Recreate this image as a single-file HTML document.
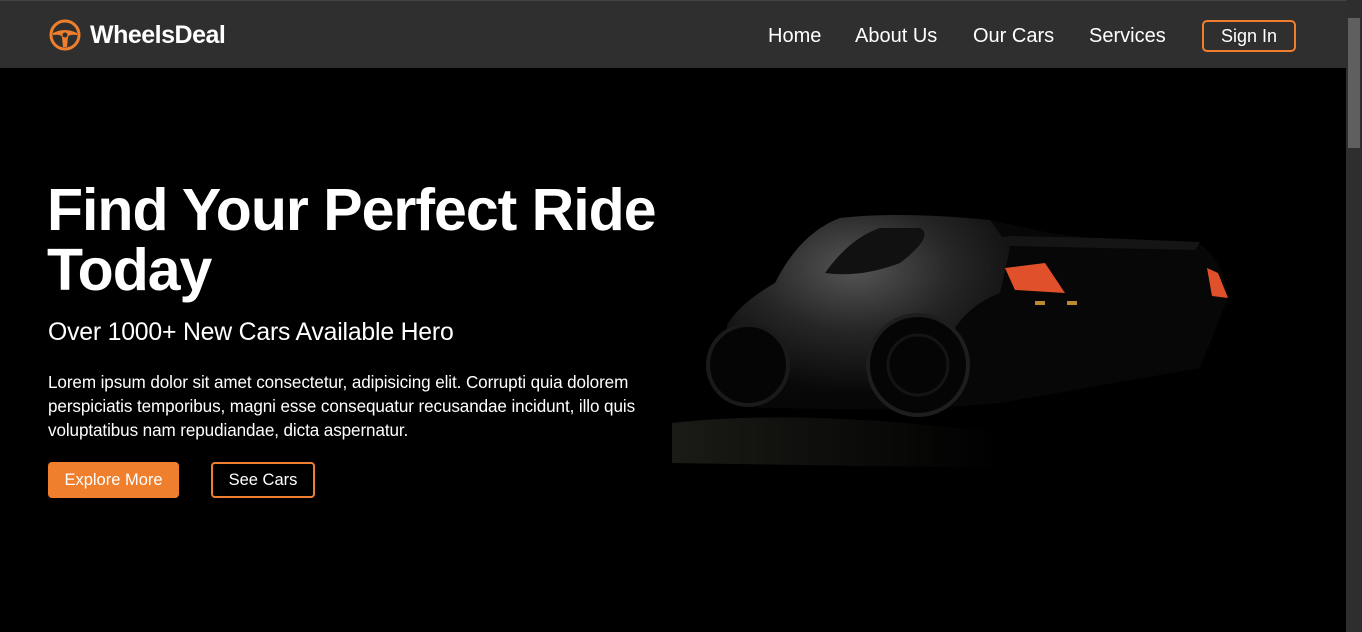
<!DOCTYPE html>
<html><head><meta charset="utf-8"><style>
*{margin:0;padding:0;box-sizing:border-box}
body{width:1362px;height:632px;background:#000;font-family:"Liberation Sans",sans-serif;color:#fff;overflow:hidden;position:relative}
.nav{position:absolute;left:0;top:0;width:1346px;height:68px;background:#2f2f2f;border-top:1px solid #444}
.logo{position:absolute;left:49px;top:18px;display:flex;align-items:center}
.logo span{font-weight:bold;font-size:25px;margin-left:9px;letter-spacing:-0.5px}
.links{position:absolute;top:23px;font-size:20px;line-height:24px}
.links a{position:absolute;white-space:nowrap;color:#fff;text-decoration:none}
.sign{position:absolute;left:1202px;top:19px;width:94px;height:32px;border:2px solid #ef7f2c;border-radius:5px;text-align:center;line-height:28px;font-size:18px}
.sb{position:absolute;left:1346px;top:0;width:16px;height:632px;background:#2e2e2e}
.thumb{position:absolute;left:1348px;top:18px;width:12px;height:130px;background:#5f5f5f}
h1{position:absolute;left:47px;top:180px;font-size:59px;line-height:60px;font-weight:bold;letter-spacing:-1px}
h2{position:absolute;left:48px;top:319px;font-size:24.8px;font-weight:normal;letter-spacing:-0.2px}
p{position:absolute;left:48px;top:371px;width:640px;font-size:17.1px;line-height:24px;letter-spacing:-0.1px}
.b1{position:absolute;left:48px;top:462px;width:131px;height:36px;background:#ef7f2c;border-radius:4px;text-align:center;line-height:37px;font-size:16.5px}
.b2{position:absolute;left:211px;top:462px;width:104px;height:36px;border:2px solid #ef7f2c;border-radius:4px;text-align:center;line-height:33px;font-size:16.5px}
</style></head><body>
<div class="nav">
 <div class="logo"><svg width="32" height="32" viewBox="0 0 32 32"><circle cx="16" cy="16" r="14" fill="none" stroke="#ef7f2c" stroke-width="3"/><path d="M4 14 Q16 8 28 14 L28 16 Q20 15 19 18 L18 28 L14 28 L13 18 Q12 15 4 16Z" fill="#ef7f2c"/><circle cx="16" cy="16" r="2.5" fill="#2f2f2f"/></svg><span>WheelsDeal</span></div>
 <div class="links"><a style="left:768px">Home</a><a style="left:855px">About Us</a><a style="left:973px">Our Cars</a><a style="left:1089px">Services</a></div>
 <div class="sign">Sign In</div>
</div>
<svg style="position:absolute;left:0;top:68px" width="1346" height="564">
<defs><radialGradient id="g" cx="0.45" cy="0.3" r="0.7"><stop offset="0" stop-color="#555"/><stop offset="0.5" stop-color="#262626"/><stop offset="1" stop-color="#080808"/></radialGradient>
<linearGradient id="gr" x1="0" x2="1"><stop offset="0" stop-color="#1a1a16"/><stop offset="1" stop-color="#000"/></linearGradient></defs>
<path d="M672 355 Q800 340 1000 365 L1000 400 L672 395Z" fill="url(#gr)"/>
<path d="M727 257 Q740 235 775 215 Q800 165 840 150 Q900 143 990 152 L1050 165 L1105 172 L1200 176 Q1225 195 1228 230 L1200 300 L1000 335 L913 342 L760 340 L730 320Z" fill="#070707"/>
<path d="M945 175 L1010 168 L1100 170 L1200 174 L1195 182 L1010 178 L950 180Z" fill="#151515"/>
<path d="M727 257 Q740 235 775 215 Q800 165 840 150 Q900 143 990 152 L1010 180 L1000 225 Q960 240 945 280 L930 320 L780 325 Q735 315 727 290Z" fill="url(#g)"/>
<path d="M825 205 Q850 170 880 160 L920 160 Q935 168 900 195 Q860 210 825 205Z" fill="#111"/>
<circle cx="918" cy="297" r="50" fill="#050505" stroke="#1e1e1e" stroke-width="4"/>
<circle cx="918" cy="297" r="30" fill="none" stroke="#141414" stroke-width="3"/>
<circle cx="748" cy="297" r="40" fill="#050505" stroke="#1a1a1a" stroke-width="4"/>
<path d="M1005 200 L1045 195 L1065 225 L1015 222Z" fill="#e0502a"/>
<path d="M1207 200 L1218 205 L1228 230 L1212 228Z" fill="#e0502a"/>
<rect x="1035" y="233" width="10" height="4" fill="#b98a30"/><rect x="1067" y="233" width="10" height="4" fill="#b98a30"/>
</svg>
<h1>Find Your Perfect Ride<br>Today</h1>
<h2>Over 1000+ New Cars Available Hero</h2>
<p>Lorem ipsum dolor sit amet consectetur, adipisicing elit. Corrupti quia dolorem perspiciatis temporibus, magni esse consequatur recusandae incidunt, illo quis voluptatibus nam repudiandae, dicta aspernatur.</p>
<div class="b1">Explore More</div><div class="b2">See Cars</div>
<div class="sb"></div><div class="thumb"></div>
</body></html>
